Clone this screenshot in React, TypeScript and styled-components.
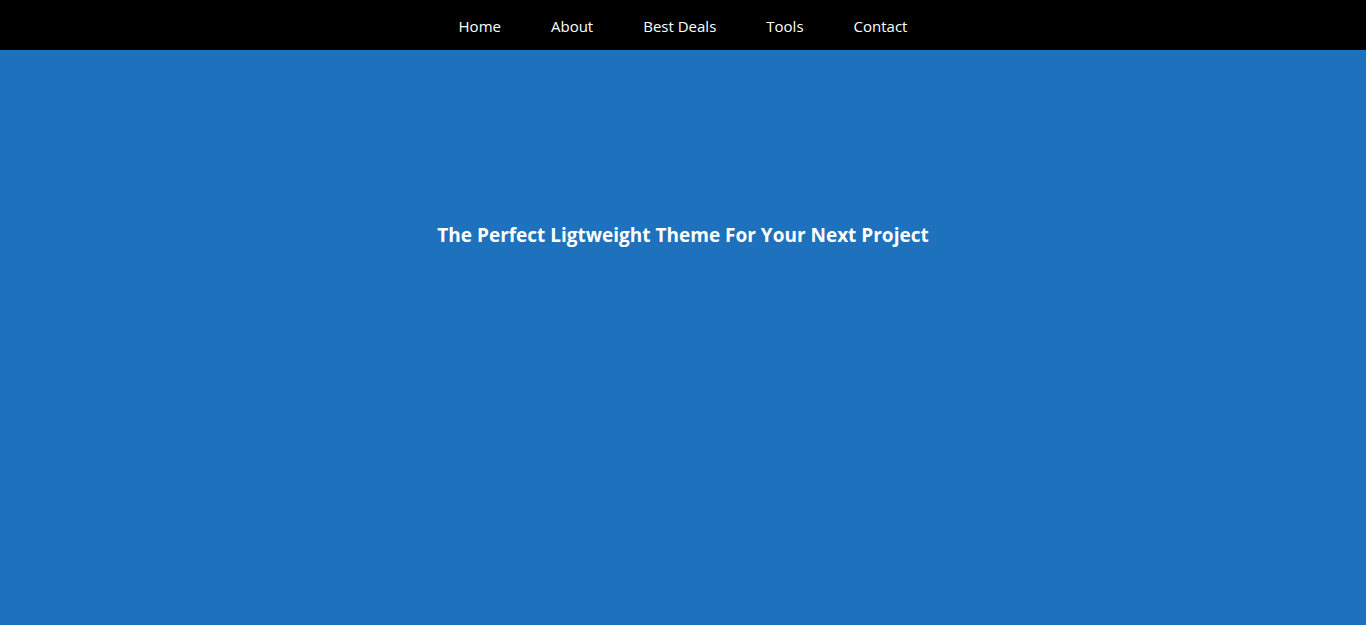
import React from "react";
import styled, { createGlobalStyle } from "styled-components";

const Global = createGlobalStyle`
  html, body { margin: 0; padding: 0; height: 100%; }
  body { font-family: "Open Sans", "Noto Sans", sans-serif; background: #1e71bd; }
  #root { min-height: 100vh; display: flex; flex-direction: column; }
`;

const NavBar = styled.nav`
  height: 50px;
  box-sizing: border-box;
  padding-top: 2px;
  background: #000;
  display: flex;
  justify-content: center;
  align-items: center;
`;

const NavList = styled.ul`
  list-style: none;
  margin: 0;
  padding: 0;
  display: flex;
  gap: 50px;
`;

const NavLink = styled.a`
  color: #fff;
  text-decoration: none;
  font-size: 15px;
  line-height: 20px;
`;

const Hero = styled.section`
  flex: 1;
  background: #1e71bd;
  display: flex;
  justify-content: center;
  padding-top: 170px;
`;

const Title = styled.h1`
  margin: 0;
  color: #fff;
  font-size: 19px;
  font-weight: 700;
  line-height: 30px;
  height: 30px;
`;

const links = ["Home", "About", "Best Deals", "Tools", "Contact"];

export default function App() {
  return (
    <>
      <Global />
      <NavBar>
        <NavList>
          {links.map((l) => (
            <li key={l}>
              <NavLink href="#">{l}</NavLink>
            </li>
          ))}
        </NavList>
      </NavBar>
      <Hero>
        <Title>The Perfect Ligtweight Theme For Your Next Project</Title>
      </Hero>
    </>
  );
}
